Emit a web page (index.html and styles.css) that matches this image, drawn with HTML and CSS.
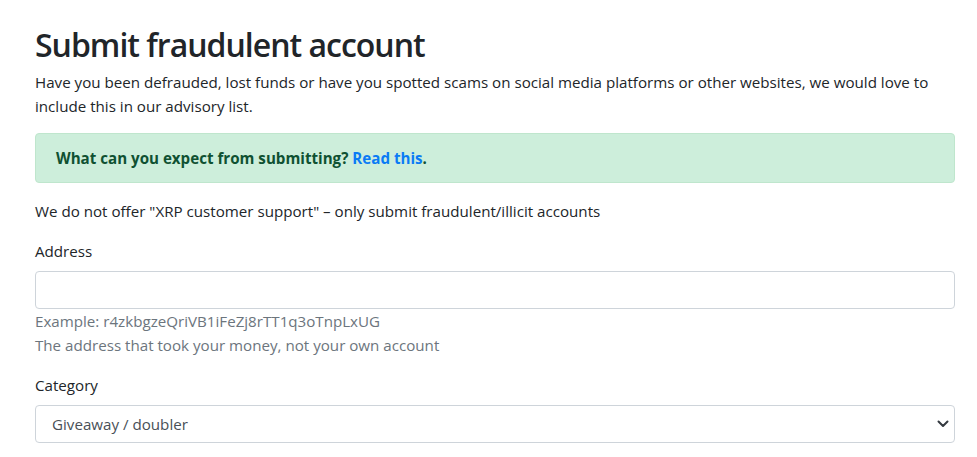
FILE: index.html
```html
<!DOCTYPE html>
<html lang="en">
<head>
<meta charset="utf-8">
<title>Submit fraudulent account</title>
<link rel="stylesheet" href="styles.css">
</head>
<body>
<main class="page">
  <h1 class="title">Submit fraudulent account</h1>
  <p class="lead-text">Have you been defrauded, lost funds or have you spotted scams on social media platforms or other websites, we would love to include this in our advisory list.</p>
  <div class="alert">What can you expect from submitting? <a href="#" class="alert-link">Read this</a>.</div>
  <p class="note">We do not offer "XRP customer support" – only submit fraudulent/illicit accounts</p>
  <div class="field">
    <label class="label" for="addr">Address</label>
    <input class="control" id="addr" type="text">
    <div class="help">Example: r4zkbgzeQriVB1iFeZj8rTT1q3oTnpLxUG</div>
    <div class="help">The address that took your money, not your own account</div>
  </div>
  <div class="field">
    <label class="label" for="cat">Category</label>
    <div class="select-wrap">
      <select class="control select" id="cat">
        <option>Giveaway / doubler</option>
      </select>
      <svg class="chev" width="12" height="8" viewBox="0 0 12 8"><path d="M1.5 1.5 6 6l4.5-4.5" fill="none" stroke="#343a40" stroke-width="2" stroke-linecap="round" stroke-linejoin="round"/></svg>
    </div>
  </div>
</main>
</body>
</html>
```
FILE: styles.css
```css
* { box-sizing: border-box; }
body {
  margin: 0;
  font-family: "Open Sans", "Noto Sans", sans-serif;
  font-size: 15.15px;
  line-height: 24px;
  color: #212529;
  background: #fff;
}
.page {
  width: 920px;
  margin-left: 35px;
  padding-top: 23px;
}
.title {
  margin: 0 0 3px;
  font-size: 32px;
  font-weight: 600;
  letter-spacing: -1px;
  line-height: 44px;
}
.lead-text { margin: 0 0 15px; }
.alert {
  background: #cdeedb;
  border: 1px solid #bfe6cd;
  border-radius: 4px;
  color: #0f5132;
  font-weight: 700;
  padding: 12px 20px;
  margin-bottom: 16px;
}
.alert-link { color: #0a7bf5; text-decoration: none; }
.note { margin: 0 0 16px; }
.field { margin-bottom: 16px; }
.label { display: block; margin-bottom: 8px; }
.control {
  display: block;
  width: 100%;
  height: 38px;
  padding: 6px 16px;
  font: inherit;
  color: #495057;
  background: #fff;
  border: 1px solid #ced4da;
  border-radius: 4px;
}
.help { color: #6c757d; }
.control + .help { margin-top: 0; }
.select-wrap { position: relative; }
.select { appearance: none; -webkit-appearance: none; }
.chev { position: absolute; right: 6px; top: 15px; pointer-events: none; }
```
